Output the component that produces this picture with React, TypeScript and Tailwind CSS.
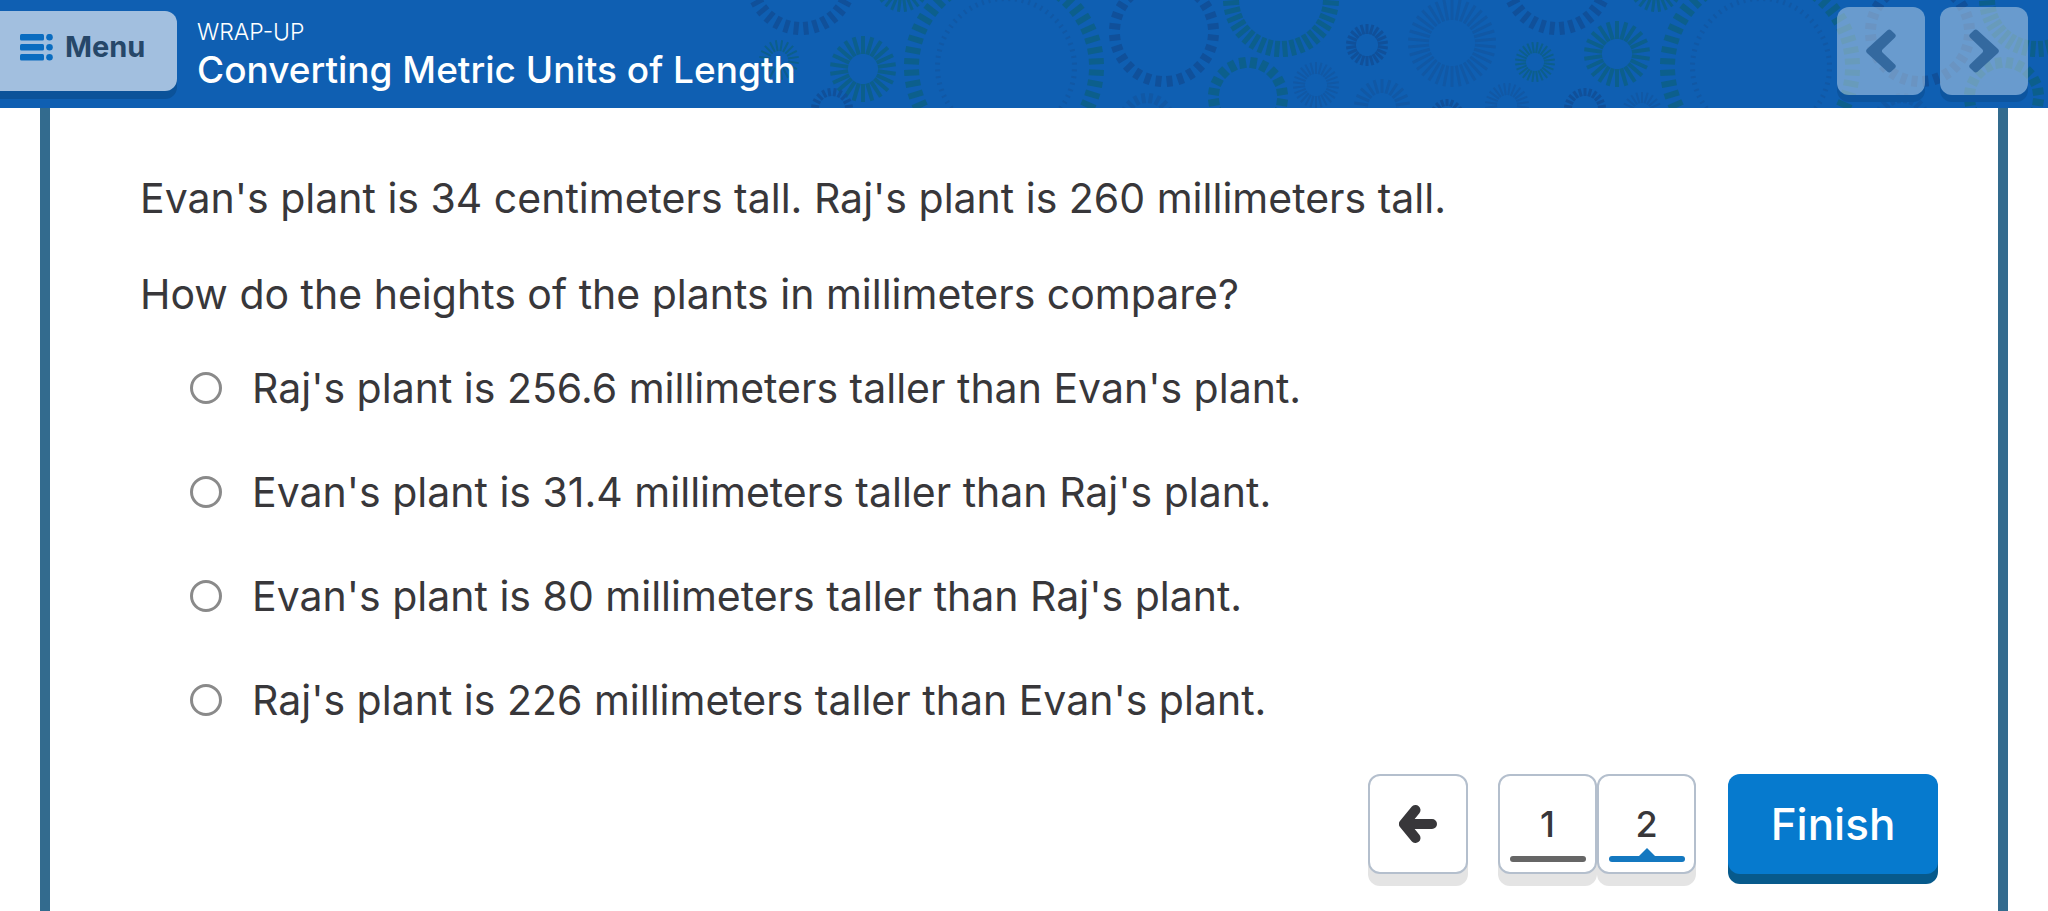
import { useState } from "react";

type Ring = {
  cx: number;
  cy: number;
  outer: number;
  inner: number;
  ticks: number;
  width: number;
  color: string;
};

const GREEN = "#0c5f8c";
const NAVY = "#10509a";
const FAINT = "#1158a5";

const rings: Ring[] = [
  { cx: 801, cy: -21, outer: 56, inner: 43, ticks: 32, width: 5, color: NAVY },
  { cx: 779, cy: 60, outer: 20, inner: 9, ticks: 20, width: 2, color: GREEN },
  { cx: 863, cy: 69, outer: 33, inner: 15, ticks: 22, width: 4, color: GREEN },
  { cx: 832, cy: 109, outer: 21, inner: 13, ticks: 20, width: 3, color: NAVY },
  { cx: 902, cy: -15, outer: 27, inner: 12, ticks: 24, width: 3, color: GREEN },
  { cx: 1004, cy: 67, outer: 100, inner: 85, ticks: 52, width: 6, color: GREEN },
  { cx: 1006, cy: 67, outer: 71, inner: 66, ticks: 64, width: 2, color: FAINT },
  { cx: 1164, cy: 32, outer: 55, inner: 44, ticks: 28, width: 6, color: NAVY },
  { cx: 1147, cy: 121, outer: 28, inner: 18, ticks: 20, width: 4, color: FAINT },
  { cx: 1281, cy: -1, outer: 58, inner: 42, ticks: 40, width: 5, color: GREEN },
  { cx: 1248, cy: 97, outer: 40, inner: 29, ticks: 20, width: 7, color: GREEN },
  { cx: 1316, cy: 85, outer: 23, inner: 11, ticks: 26, width: 2, color: FAINT },
  { cx: 1367, cy: 45, outer: 21, inner: 11, ticks: 22, width: 3, color: NAVY },
  { cx: 1382, cy: 107, outer: 28, inner: 14, ticks: 22, width: 3, color: FAINT },
  { cx: 1452, cy: 43, outer: 44, inner: 23, ticks: 34, width: 3, color: FAINT },
  { cx: 1447, cy: 116, outer: 17, inner: 10, ticks: 18, width: 3, color: NAVY },
  { cx: 1557, cy: -21, outer: 56, inner: 43, ticks: 32, width: 5, color: NAVY },
  { cx: 1535, cy: 62, outer: 20, inner: 9, ticks: 24, width: 2, color: GREEN },
  { cx: 1507, cy: 105, outer: 22, inner: 10, ticks: 24, width: 2, color: FAINT },
  { cx: 1585, cy: 109, outer: 21, inner: 13, ticks: 22, width: 3, color: NAVY },
  { cx: 1617, cy: 54, outer: 33, inner: 15, ticks: 22, width: 4, color: GREEN },
  { cx: 1642, cy: 112, outer: 20, inner: 9, ticks: 22, width: 2, color: FAINT },
  { cx: 1656, cy: -15, outer: 27, inner: 12, ticks: 24, width: 3, color: GREEN },
  { cx: 1760, cy: 67, outer: 100, inner: 85, ticks: 52, width: 6, color: GREEN },
  { cx: 1761, cy: 67, outer: 71, inner: 66, ticks: 64, width: 2, color: FAINT },
  { cx: 1920, cy: 32, outer: 55, inner: 44, ticks: 28, width: 6, color: NAVY },
  { cx: 1902, cy: 121, outer: 28, inner: 18, ticks: 20, width: 4, color: FAINT },
  { cx: 2037, cy: -1, outer: 58, inner: 42, ticks: 40, width: 5, color: GREEN },
  { cx: 2004, cy: 97, outer: 40, inner: 29, ticks: 20, width: 7, color: GREEN },
];

const answers = [
  "Raj's plant is 256.6 millimeters taller than Evan's plant.",
  "Evan's plant is 31.4 millimeters taller than Raj's plant.",
  "Evan's plant is 80 millimeters taller than Raj's plant.",
  "Raj's plant is 226 millimeters taller than Evan's plant.",
];

const ringPath = ({ cx, cy, outer, inner, ticks }: Ring) =>
  Array.from({ length: ticks }, (_, i) => {
    const angle = ((i + 0.5) / ticks) * Math.PI * 2;
    const cos = Math.cos(angle);
    const sin = Math.sin(angle);
    return `M${cx + cos * inner} ${cy + sin * inner}L${cx + cos * outer} ${cy + sin * outer}`;
  }).join("");

const HeaderPattern = () => (
  <svg
    className="absolute inset-0 h-full w-full"
    viewBox="0 0 2048 108"
    preserveAspectRatio="xMaxYMin slice"
    aria-hidden="true"
  >
    {rings.map((ring, i) => (
      <path
        key={i}
        d={ringPath(ring)}
        stroke={ring.color}
        strokeWidth={ring.width}
      />
    ))}
  </svg>
);

const MenuIcon = () => (
  <svg width="33" height="27" viewBox="0 0 33 27" fill="#0a6cc0" aria-hidden="true">
    {[0, 10, 20].map((y) => (
      <g key={y}>
        <rect x="0" y={y} width="24" height="6.5" rx="1.5" />
        <circle cx="29.5" cy={y + 3.25} r="3.3" />
      </g>
    ))}
  </svg>
);

const Chevron = ({ flip = false }: { flip?: boolean }) => (
  <svg
    width="30"
    height="44"
    viewBox="0 0 30 44"
    className={flip ? "rotate-180" : ""}
    aria-hidden="true"
  >
    <path
      d="M21.5 1.2Q23.3-.4 25 1.2L29 5Q30.6 6.8 29 8.5L16.5 20.5Q15.3 22 16.5 23.5L29 35.5Q30.6 37.2 29 39L25 42.8Q23.3 44.4 21.5 42.8L1 24Q-.8 22 1 20Z"
      fill="#34699f"
    />
  </svg>
);

const BackArrow = () => (
  <svg width="38" height="38" viewBox="0 0 38 38" fill="none" aria-hidden="true">
    <path
      d="M16.5 5L5 19L16.5 33M6 19H33"
      stroke="#38373a"
      strokeWidth="10"
      strokeLinecap="round"
      strokeLinejoin="round"
    />
  </svg>
);

const App = () => {
  const [selected, setSelected] = useState<number | null>(null);

  return (
    <div className="flex min-h-screen flex-col bg-white font-['Inter',sans-serif] text-[#38373a]">
      <header className="relative flex h-27 items-start justify-between overflow-hidden bg-[#0f5fb2]">
        <HeaderPattern />
        <div className="relative flex items-start gap-5">
          <button className="mt-[11px] flex h-20 w-[177px] items-center gap-3 rounded-r-xl bg-[#a2bfdf] pb-2 pl-5 text-[29px] font-bold text-[#264769] shadow-[0_8px_0_#0b5299]">
            <MenuIcon />
            Menu
          </button>
          <div className="pt-4 text-white">
            <p className="text-[23px] leading-8 font-light">WRAP-UP</p>
            <h1 className="text-[37px] leading-11 font-medium">
              Converting Metric Units of Length
            </h1>
          </div>
        </div>
        <div className="relative flex gap-[15px] pt-[7px] pr-5">
          <button
            aria-label="Previous"
            className="flex size-22 items-center justify-center rounded-xl bg-[#c3d7e9]/50 shadow-[0_7px_0_#0d559f]"
          >
            <Chevron />
          </button>
          <button
            aria-label="Next"
            className="flex size-22 items-center justify-center rounded-xl bg-[#c3d7e9]/50 shadow-[0_7px_0_#0d559f]"
          >
            <Chevron flip />
          </button>
        </div>
      </header>

      <main className="mx-10 flex flex-1 flex-col border-x-10 border-[#336b8e] pt-[62px] pr-15 pl-[90px] text-[41px]">
        <p className="leading-14">
          Evan's plant is 34 centimeters tall. Raj's plant is 260 millimeters tall.
        </p>
        <fieldset className="mt-10">
          <legend className="leading-14">
            How do the heights of the plants in millimeters compare?
          </legend>
          <div className="mt-[38px] flex flex-col gap-12 pl-[50px]">
            {answers.map((answer, i) => (
              <label key={answer} className="flex items-center gap-[30px] leading-14">
                <input
                  type="radio"
                  name="answer"
                  checked={selected === i}
                  onChange={() => setSelected(i)}
                  className="size-8 shrink-0 appearance-none rounded-full border-3 border-[#8a8a8a] checked:bg-[#067ace]"
                />
                {answer}
              </label>
            ))}
          </div>
        </fieldset>

        <nav className="mt-[46px] flex justify-end pb-8 font-medium">
          <button
            aria-label="Back"
            className="mr-[30px] flex size-25 items-center justify-center rounded-xl border-2 border-[#b4bfcd] bg-white shadow-[0_12px_0_#e4e4e4]"
          >
            <BackArrow />
          </button>
          <button className="flex h-25 w-[99px] flex-col items-center justify-end rounded-xl border-2 border-[#b4bfcd] bg-white pb-[10px] text-4xl shadow-[0_12px_0_#e4e4e4]">
            1
            <span className="mt-3 h-[6px] w-19 rounded-full bg-[#666666]" />
          </button>
          <button
            aria-current="page"
            className="mr-8 flex h-25 w-[99px] flex-col items-center justify-end rounded-xl border-2 border-[#b4bfcd] bg-white pb-[10px] text-4xl shadow-[0_12px_0_#e4e4e4]"
          >
            2
            <svg className="mt-1" width="76" height="14" viewBox="0 0 76 14" fill="#1478c0" aria-hidden="true">
              <path d="M30 8L38 0L46 8Z" />
              <rect y="8" width="76" height="6" rx="3" />
            </svg>
          </button>
          <button className="h-25 w-[210px] rounded-xl bg-[#067ace] text-[44px] text-white shadow-[0_10px_0_#075a8c]">
            Finish
          </button>
        </nav>
      </main>
    </div>
  );
};

export default App;
